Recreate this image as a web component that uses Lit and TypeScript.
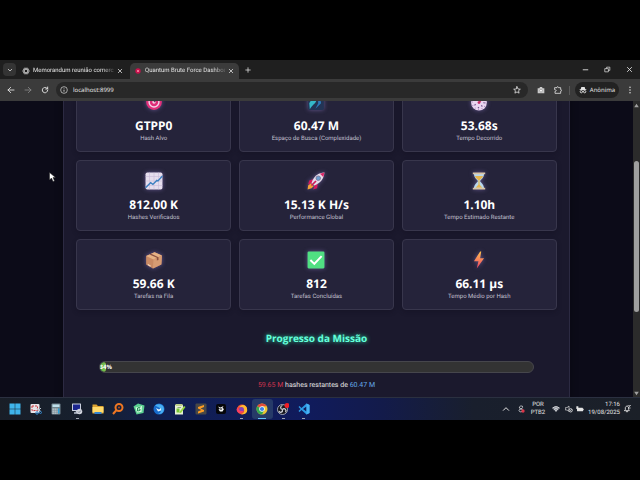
import { LitElement, html, css, svg } from "lit";
import type { TemplateResult } from "lit";
import { customElement, property } from "lit/decorators.js";

type Glyph = ReturnType<typeof svg>;

const icon = (body: Glyph, box = 24): TemplateResult =>
  html`<svg class="icon" viewBox="0 0 ${box} ${box}" aria-hidden="true">${body}</svg>`;

const stroke = (d: string, w = 2): Glyph =>
  svg`<path d=${d} fill="none" stroke="currentColor" stroke-width=${w} stroke-linecap="round" stroke-linejoin="round"/>`;

const glyphs = {
  close: stroke("M5 5L19 19M19 5L5 19", 3),
  plus: stroke("M12 3V21M3 12H21", 3),
  down: stroke("M5 9L12 16L19 9", 3),
  up: stroke("M4 16L12 8L20 16", 3),
  back: stroke("M21 12H3M11 4L3 12L11 20", 2.6),
  forward: stroke("M3 12H21M13 4L21 12L13 20", 2.6),
  reload: stroke("M20 13A8 8 0 1 1 17.5 6.5L20 9M20 3V9H14", 2.8),
  minimize: stroke("M4 13H20", 3),
  restore: stroke("M4 9H15V20H4ZM9 8V4H20V15H16", 2.4),
  star: stroke("M12 2L15 9L22 9.700L16.700 14L18.200 21.500L12 17.700L5.800 21.500L7.300 14L2 9.700L9 9Z", 2.4),
  puzzle: stroke("M3 5H9C8 1 14 1 13.500 5H20V11C24 10.500 24 16 20 15.500V22H3V16C8 16 8 11 3 11Z", 2.4),
  info: svg`<circle cx="12" cy="12" r="10" fill="none" stroke="currentColor" stroke-width="2"/><path d="M12 7V8.500M12 11V17" stroke="currentColor" stroke-width="2.600"/>`,
  camera: svg`<path d="M2 7H7L9 3H15L17 7H22V22H2Z" fill="#c9c9c9"/><circle cx="12" cy="14" r="4" fill="#fff" stroke="#777" stroke-width="1.500"/>`,
  dots: svg`<g fill="currentColor"><circle cx="12" cy="4" r="2.200"/><circle cx="12" cy="12" r="2.200"/><circle cx="12" cy="20" r="2.200"/></g>`,
  spy: svg`<path d="M7 3H17L19 10H22V12H2V10H5Z" fill="currentColor"/><circle cx="7" cy="17" r="3.500" fill="none" stroke="currentColor" stroke-width="2.600"/><circle cx="17" cy="17" r="3.500" fill="none" stroke="currentColor" stroke-width="2.600"/><path d="M10 16H14" stroke="currentColor" stroke-width="2"/>`,
  knot: svg`<g fill="none" stroke="#c4c4c4" stroke-width="2.200"><ellipse cx="12" cy="12" rx="10" ry="5"/><ellipse cx="12" cy="12" rx="10" ry="5" transform="rotate(60 12 12)"/><ellipse cx="12" cy="12" rx="10" ry="5" transform="rotate(120 12 12)"/></g>`,
  dot: svg`<circle cx="12" cy="12" r="8" fill="#c9124d"/><circle cx="12" cy="12" r="3" fill="#ff8fae"/>`,
};

const stats: Record<string, Glyph> = {
  target: svg`<circle cx="16" cy="16" r="14" fill="#e2307a"/><circle cx="16" cy="16" r="10" fill="#f4d5ea"/><circle cx="16" cy="16" r="7.500" fill="#df2d77"/><circle cx="16" cy="16" r="3" fill="#f8d3e7"/><path d="M16 16L26 6" stroke="#6a3769" stroke-width="2.500"/><path d="M22 9L23 3L26 6L30 8L25 11Z" fill="#a36bd0"/>`,
  galaxy: svg`<rect x="2" y="2" width="28" height="28" rx="3" fill="#233455"/><path d="M4 5H17C13 9 20 13 14 18C10 22 7 25 5 29L4 18C7 13 9 12 4 10Z" fill="#35b9c9"/><path d="M29 3C22 5 19 12 20 18L15 28L25 18C23 12 25 7 29 3Z" fill="#2d79b8"/><circle cx="9" cy="12" r="2" fill="#adf6ef"/>`,
  watch: svg`<circle cx="16" cy="17" r="14" fill="#e9d5f0"/><circle cx="16" cy="17" r="12" fill="none" stroke="#9c78ad" stroke-width="2" stroke-dasharray="1.500 4.800"/><path d="M16 17L24 7" stroke="#d32f62" stroke-width="3"/><circle cx="16" cy="17" r="2.500" fill="#c42d68"/><path d="M9 12L10 11M8 22L10 20M22 24L20 22M14 27L16 25M24 17L26 18" stroke="#71518c" stroke-width="2"/>`,
  chart: svg`<rect x="1" y="1" width="30" height="30" rx="3" fill="#e6deee"/><path d="M1 8H31M1 16H31M1 24H31M8 1V31M16 1V31M24 1V31" stroke="#c8b9d7" stroke-width="1"/><path d="M1 28L10 19L14 22L21 15L23 16L31 7" fill="none" stroke="#3c7fc0" stroke-width="2.500"/>`,
  rocket: svg`<path d="M11 13L4 15L2 22L10 19ZM19 21L18 29L11 31L14 23Z" fill="#d7195d"/><path d="M7 20L2 24L1 31L8 29L12 25Z" fill="#f5a13a"/><path d="M31 1C21 1 11 8 8 20L13 24C24 20 30 12 31 1Z" fill="#e6dcea"/><path d="M31 1L23 3L29 9Z" fill="#dd2867"/><circle cx="20" cy="11" r="4" fill="#6b9fd0" stroke="#7d7396" stroke-width="1.500"/><path d="M16 16L8 24" stroke="#cb1d56" stroke-width="3"/>`,
  hourglass: svg`<path d="M7 3H25C25 11 19 13 18 16C19 19 25 22 25 29H7C7 22 13 19 14 16C13 13 7 11 7 3Z" fill="#b8d7ec"/><path d="M9 7H23C22 12 18 12 16 16C14 12 10 12 9 7ZM15 15H17V22L22 28H10L15 22Z" fill="#e7b64e"/><path d="M5 1H27V4H5ZM5 28H27V31H5Z" fill="#dac5a7"/>`,
  box: svg`<path d="M2 9L17 2L30 8L29 24L14 31L2 24Z" fill="#c98a64"/><path d="M2 9L17 2L30 8L15 15Z" fill="#e6b285"/><path d="M15 15L30 8L29 24L14 31Z" fill="#d79c73"/><path d="M8 6L11 5L24 11V16L21 17V12Z" fill="#8b5142"/><path d="M5 24L10 27" stroke="#f5d8bd" stroke-width="2"/>`,
  check: svg`<rect x="1" y="1" width="30" height="30" rx="2" fill="#50df82"/><path d="M6 16L13 23L26 9" fill="none" stroke="#fff" stroke-width="3.500"/>`,
  bolt: svg`<defs><linearGradient id="b" x1="0" y1="0" x2="0" y2="1"><stop offset="0" stop-color="#ffc14e"/><stop offset="1" stop-color="#ef4268"/></linearGradient></defs><path d="M18 1L7 18H15L12 31L25 13H18L20 1Z" fill="url(#b)"/>`,
};

interface Stat { glyph: string; value: string; label: string }

const data: Stat[] = [
  { glyph: "target", value: "GTPP0", label: "Hash Alvo" },
  { glyph: "galaxy", value: "60.47 M", label: "Espaço de Busca (Complexidade)" },
  { glyph: "watch", value: "53.68s", label: "Tempo Decorrido" },
  { glyph: "chart", value: "812.00 K", label: "Hashes Verificados" },
  { glyph: "rocket", value: "15.13 K H/s", label: "Performance Global" },
  { glyph: "hourglass", value: "1.10h", label: "Tempo Estimado Restante" },
  { glyph: "box", value: "59.66 K", label: "Tarefas na Fila" },
  { glyph: "check", value: "812", label: "Tarefas Concluídas" },
  { glyph: "bolt", value: "66.11 µs", label: "Tempo Médio por Hash" },
];

interface App { name: string; glyph: Glyph; state?: "open" | "active" }

const apps: App[] = [
  { name: "Iniciar", glyph: svg`<path d="M1 1H11.500V11.500H1ZM12.500 1H23V11.500H12.500ZM1 12.500H11.500V23H1ZM12.500 12.500H23V23H12.500Z" fill="#3fb4ea"/>` },
  { name: "Captura", glyph: svg`<rect x="1" y="2" width="18" height="18" rx="2" fill="#e8e4e8"/><path d="M4 6H15V15H4Z" fill="none" stroke="#c93a3f" stroke-width="2" stroke-dasharray="4 2"/><path d="M13 11L22 17M22 10L14 18" stroke="#b9c5cf" stroke-width="2"/><circle cx="14" cy="20" r="2.500" fill="none" stroke="#3486c9" stroke-width="2"/><circle cx="21" cy="19" r="2" fill="none" stroke="#3486c9" stroke-width="2"/>` },
  { name: "Calculadora", glyph: svg`<rect x="3" y="1" width="18" height="22" rx="2" fill="#73868f"/><rect x="5" y="3" width="14" height="5" fill="#bfe0ec"/><path d="M5 12H15M5 16H15M5 20H15" stroke="#e0e7ea" stroke-width="2.500" stroke-dasharray="2.500 1.500"/><path d="M16 11H19V21H16Z" fill="#2aa0d8"/>` },
  { name: "Terminal", state: "open", glyph: svg`<rect x="2" y="1" width="18" height="15" rx="1" fill="#c9d0df"/><rect x="4" y="3" width="14" height="11" fill="#1b258d"/><path d="M6 20H16M11 16V20" stroke="#b9c1d0" stroke-width="3"/><circle cx="17" cy="17" r="5.500" fill="#d1d5dd"/><path d="M14 17L16 19L20 15" fill="none" stroke="#59677b" stroke-width="1.500"/>` },
  { name: "Arquivos", glyph: svg`<path d="M1 3H9L12 6H23V21H1Z" fill="#dca330"/><path d="M1 8H23V19H1Z" fill="#ffdb6b"/><path d="M5 18H19V22H5Z" fill="#3485cf"/>` },
  { name: "Pesquisa", glyph: svg`<circle cx="14" cy="9" r="7" fill="none" stroke="#ed7622" stroke-width="4"/><path d="M9 14L2 22" stroke="#ed7622" stroke-width="4"/><circle cx="14" cy="9" r="2" fill="#bf4d14"/>` },
  { name: "Editor", glyph: svg`<path d="M1 7L10 1L23 5L21 20L7 23Z" fill="#5bcf91"/><path d="M5 9L18 6L17 18L8 19Z" fill="#d5ffe1"/><path d="M15 8L9 10V16L14 15V12H11" fill="none" stroke="#258f59" stroke-width="2"/>` },
  { name: "Correio", glyph: svg`<circle cx="12" cy="12" r="11" fill="#176ccd"/><path d="M4 5C11 0 22 3 22 13C21 20 16 23 10 22C16 20 18 15 14 10Z" fill="#49aef1"/><path d="M6 10L12 13L16 10L16 15L10 17Z" fill="#e5f3fd"/>` },
  { name: "Notas", glyph: svg`<path d="M2 4H18V23H2Z" fill="#e7f1d5"/><path d="M3 2H17V6H3Z" fill="#bed08b"/><path d="M5 11H11V19H5Z" fill="#76c634"/><path d="M10 19L20 6L23 8L14 20Z" fill="#95d63f"/><path d="M7 9H14" stroke="#74896c" stroke-width="1.500"/>` },
  { name: "Código", glyph: svg`<rect x="1" y="1" width="22" height="22" rx="2" fill="#484848"/><path d="M18 4V8L11 11L18 14V17L6 21V17L13 14L6 11V8Z" fill="#ff9c22"/>` },
  { name: "Música", glyph: svg`<rect x="2" y="2" width="20" height="20" rx="4" fill="#050609"/><path d="M6 7L11 9L17 6L15 10L18 12L15 17H10L7 13L10 12Z" fill="#f2f3f5"/><path d="M10 12H14" stroke="#050609" stroke-width="2"/>` },
  { name: "Navegador", state: "open", glyph: svg`<circle cx="12" cy="13" r="10" fill="#ef4d36"/><path d="M4 5L7 8C12 2 18 4 21 8C26 20 17 24 10 22C18 20 18 14 13 11Z" fill="#ffb92e"/><circle cx="11" cy="13" r="5" fill="#8641b5"/><path d="M3 8C4 14 9 18 15 15C13 22 2 22 1 13Z" fill="#fa3e63"/>` },
  { name: "Chrome", state: "active", glyph: svg`<circle cx="12" cy="12" r="11" fill="#ebc431"/><path d="M12 12L2.500 6.500A11 11 0 0 1 21.500 6.500H12Z" fill="#e24b3b"/><path d="M12 12L2.500 6.500A11 11 0 0 0 12 23L16 15Z" fill="#31a853"/><circle cx="12" cy="12" r="5.500" fill="#fff"/><circle cx="12" cy="12" r="4.200" fill="#3b82e8"/>` },
  { name: "Gravador", state: "open", glyph: svg`<circle cx="11" cy="13" r="10" fill="#171820" stroke="#c9ccd3" stroke-width="1.500"/><path d="M11 13C6 12 6 6 11 5M11 13C15 9 20 14 17 18M11 13C12 18 6 21 4 16" fill="none" stroke="#c9ccd3" stroke-width="2.500"/><circle cx="20" cy="5" r="5" fill="#f01d25"/>` },
  { name: "VS Code", state: "open", glyph: svg`<path d="M17 1L23 4V20L17 23L7 14L3 18L1 16L5 12L1 8L3 6L7 10ZM17 7L10 12L17 17Z" fill="#2b9be6"/><path d="M17 1L23 4V20L17 23Z" fill="#47b2f5"/>` },
];

@customElement("stat-card")
class StatCard extends LitElement {
  @property() glyph = "";
  @property() value = "";
  @property() label = "";

  static styles = css`
    :host {
      display: flex;
      flex-direction: column;
      align-items: center;
      box-sizing: border-box;
      height: 71px;
      padding-top: 11px;
      border: 1px solid #38364c;
      border-radius: 4px;
      background: #25233a;
      box-shadow: 0 2px 4px #12102066;
    }
    .icon {
      width: 18px;
      height: 18px;
      filter: drop-shadow(0 0 2px #9b86d888);
    }
    .value {
      margin-top: 7px;
      font-size: 12px;
      line-height: 16px;
      font-weight: 700;
      color: #fff;
      white-space: nowrap;
    }
    .label {
      font-family: Roboto, sans-serif;
      font-size: 6px;
      line-height: 10px;
      color: #c2c0d0;
      white-space: nowrap;
    }
  `;

  render() {
    return html`${icon(stats[this.glyph], 32)}
      <div class="value">${this.value}</div>
      <div class="label">${this.label}</div>`;
  }
}

@customElement("app-root")
class AppRoot extends LitElement {
  @property({ type: Number }) progress = 1.34;

  static styles = css`
    :host {
      display: flex;
      flex-direction: column;
      box-sizing: border-box;
      height: 100vh;
      padding: 60px 0;
      background: #000;
      color: #e4e4e4;
      font: 6px/8px "Noto Sans", "Open Sans", sans-serif;
      text-rendering: geometricPrecision;
      overflow: hidden;
      position: relative;
    }
    button {
      display: grid;
      place-items: center;
      padding: 0;
      border: 0;
      background: none;
      color: inherit;
      font: inherit;
      text-rendering: inherit;
    }
    .icon {
      display: block;
      width: 8px;
      height: 8px;
      flex: none;
    }
    .tabs {
      display: flex;
      align-items: center;
      height: 19px;
      flex: none;
      padding-left: 3px;
      background: #1f1f1f;
    }
    .search {
      width: 13px;
      height: 13px;
      border-radius: 4px;
      background: #343434;
    }
    .search .icon,
    .tab button .icon,
    .add .icon {
      width: 6px;
      height: 6px;
    }
    .tab {
      display: flex;
      align-items: center;
      gap: 3px;
      box-sizing: border-box;
      width: 109px;
      height: 16px;
      padding: 0 5px 0 4px;
      margin-top: 3px;
      border-radius: 5px 5px 0 0;
    }
    .tab.first {
      margin-left: 2px;
      width: 112px;
      padding-right: 7px;
    }
    .tab.active {
      background: #3b3b3b;
    }
    .tab .title {
      flex: 1;
      min-width: 0;
      font-family: Roboto, sans-serif;
      white-space: nowrap;
      mask-image: linear-gradient(90deg, #000 85%, #0003);
    }
    .add {
      width: 18px;
      height: 16px;
    }
    .window {
      display: flex;
      margin-left: auto;
    }
    .window button {
      width: 22px;
      height: 18px;
    }
    .window .icon {
      width: 7px;
      height: 7px;
    }
    .toolbar {
      display: flex;
      align-items: center;
      flex: none;
      height: 22px;
      padding-left: 2px;
      background: #3b3b3b;
    }
    .nav {
      width: 17px;
      height: 16px;
    }
    .nav.off {
      color: #858585;
    }
    .address {
      display: flex;
      align-items: center;
      flex: 1;
      gap: 5px;
      box-sizing: border-box;
      height: 16px;
      margin: 0 4px 0 3px;
      padding: 0 7px 0 4px;
      border-radius: 8px;
      background: #282828;
    }
    .address input {
      flex: 1;
      min-width: 0;
      padding: 0;
      border: 0;
      outline: 0;
      background: none;
      color: #e8e8e8;
      font: inherit;
      text-rendering: inherit;
    }
    .divider {
      width: 1px;
      height: 9px;
      margin: 0 5px 0 3px;
      background: #5b5b5b;
    }
    .private {
      display: flex;
      align-items: center;
      justify-content: center;
      gap: 3px;
      box-sizing: border-box;
      width: 44px;
      height: 16px;
      border-radius: 8px;
      background: #222;
    }
    .more {
      width: 21px;
      height: 16px;
    }
    .viewport {
      display: flex;
      flex: 1;
      min-height: 0;
      background: #0c0b18;
    }
    .page {
      flex: 1;
      min-width: 0;
      overflow: hidden;
    }
    main {
      box-sizing: border-box;
      width: 80%;
      min-height: 120%;
      margin: -33px auto 0;
      padding: 12px;
      border: 1px solid #2c2a42;
      background: #1b192d;
      box-shadow: 0 0 8px #0005;
    }
    .grid {
      display: grid;
      grid-template-columns: repeat(3, minmax(0, 1fr));
      gap: 8px;
    }
    .mission {
      display: flex;
      flex-direction: column;
      align-items: center;
      padding: 20px 23px 0;
    }
    h2 {
      margin: 0 0 15px;
      font-family: "Open Sans", sans-serif;
      font-size: 10px;
      line-height: 16px;
      font-weight: 700;
      color: #64ffda;
      text-shadow: 0 0 4px #28d7a8;
    }
    .track {
      box-sizing: border-box;
      width: 100%;
      height: 12px;
      border: 1px solid #46464c;
      border-radius: 6px;
      background: #333;
      overflow: hidden;
    }
    .fill {
      display: flex;
      align-items: center;
      justify-content: center;
      height: 10px;
      border-radius: 5px;
      background: linear-gradient(90deg, #4caf50, #8bc34a);
      color: #fff;
      font-weight: 700;
      white-space: nowrap;
    }
    .remain {
      margin: 7px 0 0;
      font-family: Roboto, sans-serif;
      font-size: 7px;
      line-height: 10px;
    }
    .left {
      color: #d0344f;
    }
    .total {
      color: #64a9e8;
    }
    .scroll {
      display: grid;
      grid-template-rows: 8px 52fr 151fr 77fr 8px;
      justify-items: center;
      align-items: center;
      width: 7px;
      flex: none;
      background: #2b2b2b;
      color: #a0a0a0;
    }
    .scroll .icon {
      width: 5px;
      height: 5px;
    }
    .thumb {
      grid-row: 3;
      width: 5px;
      height: 100%;
      border-radius: 3px;
      background: #9f9f9f;
    }
    .end {
      grid-row: 5;
    }
    .taskbar {
      display: flex;
      align-items: center;
      flex: none;
      box-sizing: border-box;
      height: 23px;
      padding: 0 8px 0 5px;
      border-top: 1px solid #2b3040;
      background: linear-gradient(90deg, #191e27 0%, #16202f 15%, #111f52 26%, #101b5c 48%, #131b4a 60%, #191f2d 74%, #1b2028 100%);
    }
    .apps {
      display: grid;
      grid-template-columns: repeat(15, 1fr);
      width: 309px;
    }
    .app {
      position: relative;
      height: 20px;
      border-radius: 3px;
    }
    .app .icon {
      width: 12px;
      height: 12px;
    }
    .app.active {
      background: #263a68;
    }
    .app.open::after,
    .app.active::after {
      content: "";
      position: absolute;
      bottom: 0;
      width: 3px;
      height: 1px;
      background: #9fa4b0;
    }
    .app.active::after {
      width: 8px;
      background: #63c3f5;
    }
    .tray {
      display: flex;
      align-items: center;
      margin-left: auto;
      font-family: Roboto, sans-serif;
    }
    .tray .glyph {
      width: 11px;
      height: 16px;
    }
    .tray .wide {
      width: 15px;
    }
    .lang {
      width: 20px;
      text-align: center;
    }
    .clock {
      width: 35px;
      margin-right: 1px;
      text-align: right;
    }
    .cursor {
      position: absolute;
      left: 49px;
      top: 172px;
      width: 7px;
      height: 10px;
    }
  `;

  private tab(title: string, glyph: Glyph, cls: string) {
    return html`<div class="tab ${cls}">
      ${icon(glyph)}<span class="title">${title}</span>
      <button aria-label="Fechar guia">${icon(glyphs.close)}</button>
    </div>`;
  }

  render() {
    return html`
      <header class="tabs">
        <button class="search" aria-label="Pesquisar guias">${icon(glyphs.down)}</button>
        ${this.tab("Memorandum reunião comerc", glyphs.knot, "first")}
        ${this.tab("Quantum Brute Force Dashboa", glyphs.dot, "active")}
        <button class="add" aria-label="Nova guia">${icon(glyphs.plus)}</button>
        <div class="window">
          <button aria-label="Minimizar">${icon(glyphs.minimize)}</button>
          <button aria-label="Restaurar">${icon(glyphs.restore)}</button>
          <button aria-label="Fechar">${icon(glyphs.close)}</button>
        </div>
      </header>
      <nav class="toolbar">
        <button class="nav" aria-label="Voltar">${icon(glyphs.back)}</button>
        <button class="nav off" aria-label="Avançar">${icon(glyphs.forward)}</button>
        <button class="nav" aria-label="Recarregar">${icon(glyphs.reload)}</button>
        <div class="address">
          ${icon(glyphs.info)}
          <input aria-label="Endereço" .value=${"localhost:8999"} />
          ${icon(glyphs.star)}
        </div>
        <button class="nav" aria-label="Captura de tela">${icon(glyphs.camera)}</button>
        <button class="nav" aria-label="Extensões">${icon(glyphs.puzzle)}</button>
        <div class="divider"></div>
        <button class="private">${icon(glyphs.spy)}Anônima</button>
        <button class="more" aria-label="Menu">${icon(glyphs.dots)}</button>
      </nav>
      <div class="viewport">
        <div class="page">
          <main>
            <section class="grid">
              ${data.map((s) => html`<stat-card .glyph=${s.glyph} .value=${s.value} .label=${s.label}></stat-card>`)}
            </section>
            <section class="mission">
              <h2>Progresso da Missão</h2>
              <div class="track" role="progressbar" aria-label="Progresso da Missão" aria-valuenow=${this.progress}>
                <div class="fill" style="width: ${this.progress}%">${this.progress}%</div>
              </div>
              <p class="remain"><span class="left">59.65 M</span> hashes restantes de <span class="total">60.47 M</span></p>
            </section>
          </main>
        </div>
        <div class="scroll">
          ${icon(svg`<path d="M12 4L23 20H1Z" fill="currentColor"/>`)}
          <div class="thumb"></div>
          <div class="end">${icon(svg`<path d="M12 20L23 4H1Z" fill="currentColor"/>`)}</div>
        </div>
      </div>
      <footer class="taskbar">
        <div class="apps">
          ${apps.map((a) => html`<button class="app ${a.state ?? ""}" aria-label=${a.name}>${icon(a.glyph)}</button>`)}
        </div>
        <div class="tray">
          <button class="glyph wide" aria-label="Ícones ocultos">${icon(glyphs.up)}</button>
          <button class="glyph wide" aria-label="Sincronização">
            ${icon(svg`<path d="M18 5C14 1 6 3 7 9C8 13 17 10 17 16C16 22 6 22 6 16C6 11 17 13 17 7" fill="none" stroke="#d4d4d8" stroke-width="2.500"/><circle cx="18" cy="18" r="5" fill="#dc3649"/>`)}
          </button>
          <div class="lang">POR<br />PTB2</div>
          <button class="glyph wide" aria-label="Rede">
            ${icon(svg`<path d="M1 8Q12 -1 23 8L12 21Z" fill="#8d929c"/>${stroke("M2 9Q12 0 22 9M6 13Q12 7 18 13M10 17Q12 15 14 17", 2.4)}`)}
          </button>
          <button class="glyph" aria-label="Volume">
            ${icon(svg`<path d="M1 8H6L12 3V19L6 15H1Z" fill="none" stroke="currentColor" stroke-width="2"/><circle cx="17" cy="16" r="5" fill="#2a303b" stroke="currentColor" stroke-width="2.500"/><path d="M14 19L20 13" stroke="currentColor" stroke-width="2"/>`)}
          </button>
          <button class="glyph" aria-label="Bateria">
            ${icon(svg`<rect x="3" y="8" width="18" height="11" rx="2" fill="currentColor"/><path d="M22 11H24V16H22ZM1 4H7V12H1Z" fill="currentColor"/>`)}
          </button>
          <div class="clock">17:16<br />19/08/2025</div>
          <button class="glyph" aria-label="Notificações">
            ${icon(svg`${stroke("M5 17H19L17 13V8C16 2 8 2 7 8V13ZM10 20H14", 2.6)}<path d="M14 1H23L15 9H23" fill="none" stroke="currentColor" stroke-width="2"/>`)}
          </button>
        </div>
      </footer>
      <svg class="cursor" viewBox="0 0 14 20" aria-hidden="true"><path d="M1 1V16L5 12L8 19L11 18L8 11H13Z" fill="#fff" stroke="#222" stroke-width="1"/></svg>
    `;
  }
}
